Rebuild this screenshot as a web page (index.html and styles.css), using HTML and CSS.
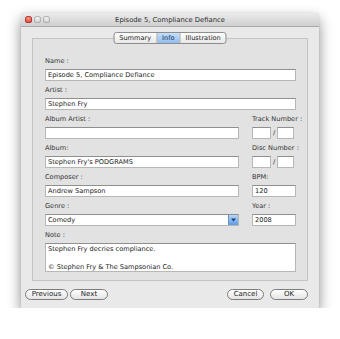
FILE: index.html
```html
<!DOCTYPE html>
<html lang="en">
<head>
    <meta charset="UTF-8">
    <meta name="viewport" content="width=device-width, initial-scale=1.0">
    <title>Episode 5, Compliance Defiance</title>
    <link rel="stylesheet" href="styles.css">
</head>
<body>
    <div class="window">
        <div class="titlebar">
            <div class="lights">
                <span class="light red"></span>
                <span class="light"></span>
                <span class="light"></span>
            </div>
            <div class="title">Episode 5, Compliance Defiance</div>
        </div>

        <div class="content">
            <div class="tabs">
                <span class="tab">Summary</span>
                <span class="tab active">Info</span>
                <span class="tab">Illustration</span>
            </div>

            <div class="panel">
                <div class="form">
                    <div class="field wide">
                        <label>Name :</label>
                        <div class="input">Episode 5, Compliance Defiance</div>
                    </div>
                    <div class="field wide">
                        <label>Artist :</label>
                        <div class="input">Stephen Fry</div>
                    </div>
                    <div class="field">
                        <label>Album Artist :</label>
                        <div class="input"></div>
                    </div>
                    <div class="field">
                        <label>Track Number :</label>
                        <div class="pair">
                            <div class="input first"></div>
                            <span class="slash">/</span>
                            <div class="input"></div>
                        </div>
                    </div>
                    <div class="field">
                        <label>Album:</label>
                        <div class="input">Stephen Fry's PODGRAMS</div>
                    </div>
                    <div class="field">
                        <label>Disc Number :</label>
                        <div class="pair">
                            <div class="input first"></div>
                            <span class="slash">/</span>
                            <div class="input"></div>
                        </div>
                    </div>
                    <div class="field">
                        <label>Composer :</label>
                        <div class="input">Andrew Sampson</div>
                    </div>
                    <div class="field">
                        <label>BPM:</label>
                        <div class="input">120</div>
                    </div>
                    <div class="field">
                        <label>Genre :</label>
                        <div class="input select">
                            <span>Comedy</span>
                            <span class="arrow">
                                <svg width="5" height="4" viewBox="0 0 5 4"><path d="M0 0.5 L5 0.5 L2.5 3.5 Z" fill="#1d3f77"/></svg>
                            </span>
                        </div>
                    </div>
                    <div class="field">
                        <label>Year :</label>
                        <div class="input">2008</div>
                    </div>
                    <div class="field wide">
                        <label>Note :</label>
                        <div class="input note">
                            <p>Stephen Fry decries compliance.</p>
                            <p>&copy; Stephen Fry &amp; The Sampsonian Co.</p>
                        </div>
                    </div>
                </div>
            </div>

            <div class="actions">
                <div class="group">
                    <button class="prev">Previous</button>
                    <button class="next">Next</button>
                </div>
                <div class="group right">
                    <button class="cancel">Cancel</button>
                    <button class="ok">OK</button>
                </div>
            </div>
        </div>
    </div>
</body>
</html>
```

FILE: styles.css
```css
body {
    font-family: "DejaVu Sans", Arial, sans-serif;
    font-size: 6.6px;
    margin: 0;
    padding: 0;
    background: #fff;
    color: #222;
}

.window {
    width: 298px;
    margin: 13px 0 0 21px;
    background: #e9e9e9;
    border-radius: 4px 4px 0 0;
    box-shadow: 0 6px 14px rgba(0, 0, 0, 0.45), 0 0 1px rgba(0, 0, 0, 0.3);
}

.titlebar {
    height: 14px;
    display: grid;
    grid-template-columns: 1fr auto 1fr;
    align-items: center;
    background: linear-gradient(#ececec, #cfcfcf);
    border-bottom: 1px solid #a9a9a9;
    border-radius: 4px 4px 0 0;
    box-sizing: border-box;
}

.lights {
    display: flex;
    gap: 2px;
    padding-left: 4px;
}

.light {
    width: 7px;
    height: 7px;
    border-radius: 50%;
    background: radial-gradient(circle at 50% 35%, #f4f4f4, #b9b9b9);
    box-shadow: inset 0 0 0 0.5px #9a9a9a;
}

.light.red {
    background: radial-gradient(circle at 50% 35%, #ff9a8a, #d2241a);
    box-shadow: inset 0 0 0 0.5px #8e1b12;
}

.title {
    font-size: 6.8px;
    color: #2a2a2a;
}

.content {
    padding: 5px 11px 8px 4px;
}

.tabs {
    position: relative;
    z-index: 1;
    display: flex;
    width: fit-content;
    margin: 0 auto;
    transform: translateX(3.5px);
    border: 1px solid #8d8d8d;
    border-radius: 3px;
    background: linear-gradient(#fdfdfd, #e8e8e8);
    overflow: hidden;
}

.tab {
    height: 10px;
    line-height: 10px;
    padding: 0 5px;
    border-left: 1px solid #a6a6a6;
}

.tab:first-child {
    border-left: none;
}

.tab.active {
    background: linear-gradient(#c6dff8, #8fbdf0);
    color: #0e2a55;
}

.panel {
    margin: -6px 0 0 7px;
    padding: 17px 13px 8px 12px;
    border: 1px solid #c4c4c4;
    background: #e2e2e2;
}

.form {
    display: grid;
    grid-template-columns: 194px 44px;
    column-gap: 13px;
    row-gap: 4px;
}

.field.wide {
    grid-column: 1 / -1;
}

.field label {
    display: block;
    height: 10px;
    line-height: 10px;
    margin-bottom: 3px;
    color: #333;
    white-space: nowrap;
}

.input {
    height: 12px;
    line-height: 11px;
    padding: 0 2px;
    background: #fff;
    border: 1px solid #b7b7b7;
    border-top-color: #8f8f8f;
    box-sizing: border-box;
    color: #1b1b1b;
    overflow: hidden;
}

.pair {
    display: flex;
    align-items: center;
}

.pair .input {
    width: 17px;
}

.pair .input.first {
    width: 19px;
}

.slash {
    width: 6px;
    text-align: center;
}

.select {
    display: flex;
    justify-content: space-between;
    padding-right: 0;
}

.arrow {
    width: 9px;
    display: flex;
    align-items: center;
    justify-content: center;
    background: linear-gradient(#b8d6f6, #5b9be3);
    border-left: 1px solid #6c8fbd;
}

.note {
    height: 29px;
    line-height: 9px;
    padding-top: 1px;
}

.note p {
    margin: 0 0 9px;
}

.actions {
    display: flex;
    justify-content: space-between;
    margin-top: 8px;
}

.group {
    display: flex;
    gap: 2px;
}

.group.right {
    gap: 6px;
}

button {
    height: 11px;
    padding: 0;
    font-family: inherit;
    font-size: 7px;
    line-height: 9px;
    color: #222;
    border: 1px solid #7c7c7c;
    border-radius: 6px;
    background: linear-gradient(#ffffff, #e4e4e4);
}

.prev { width: 43px; }
.next { width: 38px; }
.cancel { width: 37px; }
.ok { width: 38px; }
```
